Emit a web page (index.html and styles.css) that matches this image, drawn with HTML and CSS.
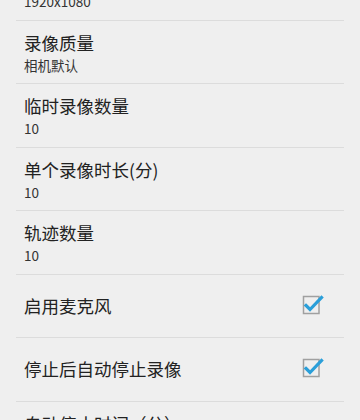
FILE: index.html
```html
<!DOCTYPE html>
<html>
<head>
<meta charset="utf-8">
<link rel="stylesheet" href="styles.css">
</head>
<body>
<div class="list">
  <div class="row two">
    <div class="text">
      <div class="title">视频分辨率</div>
      <div class="sub">1920x1080</div>
    </div>
  </div>
  <div class="row two">
    <div class="text">
      <div class="title">录像质量</div>
      <div class="sub">相机默认</div>
    </div>
  </div>
  <div class="row two">
    <div class="text">
      <div class="title">临时录像数量</div>
      <div class="sub">10</div>
    </div>
  </div>
  <div class="row two">
    <div class="text">
      <div class="title">单个录像时长(分)</div>
      <div class="sub">10</div>
    </div>
  </div>
  <div class="row two">
    <div class="text">
      <div class="title">轨迹数量</div>
      <div class="sub">10</div>
    </div>
  </div>
  <div class="row one">
    <div class="text">
      <div class="title">启用麦克风</div>
    </div>
    <svg class="check" viewBox="0 0 24 26" width="24" height="26">
      <rect x="3.5" y="3.5" width="15.5" height="17" fill="none" stroke="#a0a0a0" stroke-width="1.5"/>
      <path d="M6 12.5 L10 16.5 L21.5 4.5" fill="none" stroke="#2b9fd9" stroke-width="3.2" stroke-linecap="square"/>
    </svg>
  </div>
  <div class="row one">
    <div class="text">
      <div class="title">停止后自动停止录像</div>
    </div>
    <svg class="check" viewBox="0 0 24 26" width="24" height="26">
      <rect x="3.5" y="3.5" width="15.5" height="17" fill="none" stroke="#a0a0a0" stroke-width="1.5"/>
      <path d="M6 12.5 L10 16.5 L21.5 4.5" fill="none" stroke="#2b9fd9" stroke-width="3.2" stroke-linecap="square"/>
    </svg>
  </div>
  <div class="row two">
    <div class="text">
      <div class="title">自动停止时间（分）</div>
      <div class="sub">10</div>
    </div>
  </div>
</div>
</body>
</html>
```
FILE: styles.css
```css
html, body {
  margin: 0;
  padding: 0;
  background: #efefef;
  width: 360px;
  height: 420px;
  overflow: hidden;
  font-family: "Noto Sans CJK SC", "Roboto", sans-serif;
}
.list {
  margin-top: -43px;
}
.row {
  height: 62.5px;
  margin: 0 16px;
  border-bottom: 1px solid #dcdcdc;
  display: flex;
  align-items: center;
  padding-left: 8px;
  padding-right: 20px;
}
.row.two {
  align-items: flex-start;
  padding-top: 0;
}
.text {
  flex: 1;
  display: flex;
  flex-direction: column;
}
.row.two .text {
  padding-top: 11px;
}
.title {
  font-size: 17.5px;
  line-height: 22px;
  color: #222;
}
.sub {
  margin-top: 2px;
  font-size: 13.5px;
  line-height: 18px;
  color: #333;
}
.check {
  display: block;
}
```
